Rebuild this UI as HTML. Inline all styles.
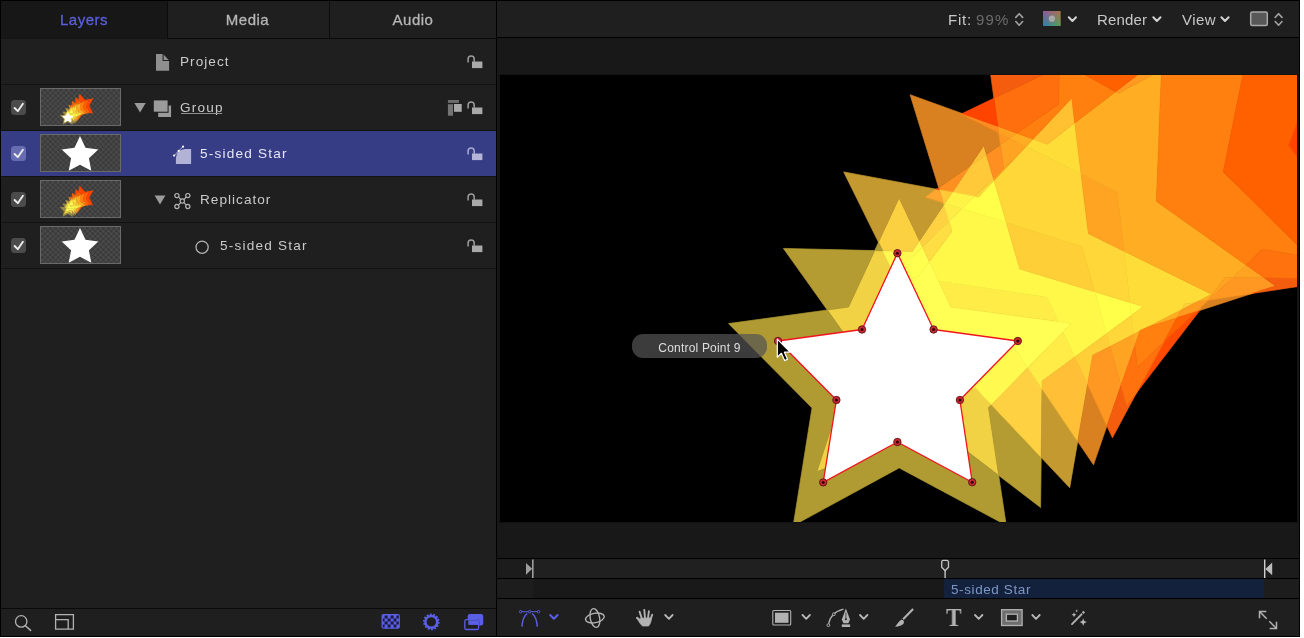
<!DOCTYPE html>
<html lang="en">
<head>
<meta charset="utf-8">
<title>Motion – Layers</title>
<style>
html,body{margin:0;padding:0;background:#fff;}
body{width:1304px;height:638px;overflow:hidden;position:relative;font-family:"Liberation Sans",sans-serif;}
#app{position:absolute;left:0;top:0;width:1300px;height:637px;background:#000;overflow:hidden;}
.abs{position:absolute;}
.tab,.lbl,.tb,.tx{will-change:transform;}
.tab{position:absolute;top:1px;height:37px;line-height:37px;text-align:center;font-size:15px;color:#b6b6b6;background:#1f1f1f;letter-spacing:.5px;-webkit-text-stroke:.3px;}
.tab.on{background:#171717;color:#5b5fe0;height:38px;}
.row{position:absolute;left:1px;width:495px;height:45px;background:#1f1f1f;}
.row.sel{background:#373d85;}
.lbl{position:absolute;font-size:13.6px;line-height:16px;color:#c9c9c9;letter-spacing:1.2px;white-space:nowrap;}
.cb{position:absolute;left:10px;width:15px;height:15px;border-radius:3.5px;background:#4b4b4b;}
.row.sel .cb{background:#686cb0;}
.th{position:absolute;left:39px;top:3px;width:79px;height:36px;border:1px solid #6a6a6a;background-color:#424242;overflow:hidden;}
.tb{position:absolute;font-size:15px;line-height:18px;color:#c8c8c8;letter-spacing:.45px;white-space:nowrap;}
svg{position:absolute;left:0;top:0;overflow:visible;}
</style>
</head>
<body>
<div id="app">

<!-- ============ LEFT PANEL ============ -->
<div class="abs" style="left:1px;top:1px;width:495px;height:635px;background:#1f1f1f"></div>
<div class="abs" style="left:1px;top:38px;width:495px;height:1px;background:#0a0a0a"></div>
<div class="tab on" style="left:1px;width:166px">Layers</div>
<div class="tab" style="left:168px;width:159px">Media</div>
<div class="tab" style="left:330px;width:166px">Audio</div>
<div class="abs" style="left:1px;top:38px;width:166px;height:1px;background:#141414"></div>
<div class="abs" style="left:167px;top:1px;width:1px;height:38px;background:#0c0c0c"></div>
<div class="abs" style="left:329px;top:1px;width:1px;height:38px;background:#0c0c0c"></div>

<div class="row" style="top:39px"><span class="lbl" style="left:178.5px;top:14.5px;letter-spacing:1.05px">Project</span></div>
<div class="abs" style="left:1px;top:84px;width:495px;height:1px;background:#121212"></div>
<div class="row" style="top:85px"><div class="cb" style="top:15px"></div><div class="th"><svg width="79" height="36" viewBox="0 0 79 36"><defs><pattern id="chk2" width="5.3" height="5.3" patternUnits="userSpaceOnUse"><rect width="5.3" height="5.3" fill="#3b3b3b"/><rect width="2.65" height="2.65" fill="#494949"/><rect x="2.65" y="2.65" width="2.65" height="2.65" fill="#494949"/></pattern></defs><rect width="79" height="36" fill="url(#chk2)"/><g transform="translate(-15.66 11.00) scale(0.0472)"><path fill="#ffc83e" fill-opacity="0.56" d="M899,198 919,241 944,205 943,203 925,197 937,189 844,172 879,242ZM1042,389 1041,457 1070,488 1078,441Z"/><path fill="#ffd443" fill-opacity="0.97" d="M919,241 899,198 879,242 883,251 912,252Z"/><path fill="#ffd242" stroke="#ffd242" stroke-width="5" d="M919,241 922,247 949,221 944,205ZM1028,368 991,405 1041,457 1042,389Z"/><path fill="#fff950" stroke="#fff950" stroke-width="5" d="M922,247 919,241 912,252 883,251 894,274ZM991,405 1028,368 1012,344 875,346 841,412 975,388ZM895,275 903,292 896,307 917,278Z"/><path fill="#ffde43" stroke="#ffde43" stroke-width="5" d="M922,247 929,262 952,231 949,221Z"/><path fill="#ffff50" stroke="#ffff50" stroke-width="5" d="M929,262 922,247 894,274 895,275 917,278Z"/><path fill="#fff848" stroke="#fff848" stroke-width="5" d="M929,262 939,281 1047,297 1058,322 1071,323 1063,332 1075,357 1107,334 1095,292 1020,269 1006,223 962,209 949,221 952,231Z"/><path fill="#ffff54" stroke="#ffff54" stroke-width="5" d="M939,281 929,262 917,278ZM1058,322 951,307 939,281 917,278 896,307 875,346 1012,344 1028,368 1063,332ZM1063,332 1071,323 1058,322Z"/><path fill="#ffec47" stroke="#ffec47" stroke-width="5" d="M939,281 951,307 1058,322 1047,297ZM1063,332 1028,368 1042,389 1042,381 1075,357ZM945,203 944,205 949,221 962,209Z"/><path fill="#ffdc47" fill-opacity="0.46" d="M991,405 989,408 999,475 1041,508 1041,457ZM827,310 849,307 875,251 783,248Z"/><path fill="#ffdf48" fill-opacity="0.88" d="M999,475 989,408 991,405 975,388 841,412 875,346 866,346 896,307 903,292 895,275 894,275 894,274 883,251 875,251 849,307 827,310 857,351 817,472 938,429Z"/><path fill="#ffe249" fill-opacity="0.44" d="M827,310 728,324 812,408 793,526 899,468 1006,525 999,475 938,429 817,472 857,351ZM879,242 875,251 883,251Z"/><path fill="#ff9626" fill-opacity="0.70" d="M984,146 986,154 1000,145 999,133 961,114 962,114 910,95 939,188 970,166ZM1088,385 1078,441 1094,465 1107,426ZM1200,310 1252,294 1208,300 1206,303Z"/><path fill="#ffc039" stroke="#ffc039" stroke-width="5" d="M986,154 984,146 970,166Z"/><path fill="#ff8f20" stroke="#ff8f20" stroke-width="5" d="M986,154 993,178 1004,168 1000,145ZM952,192 970,166 939,188 939,190ZM1196,312 1200,310 1206,303Z"/><path fill="#ffc939" stroke="#ffc939" stroke-width="5" d="M993,178 986,154 970,166 952,192 975,196Z"/><path fill="#ffa422" stroke="#ffa422" stroke-width="5" d="M993,178 994,181 1026,147 1010,138 1000,145 1004,168ZM1081,174 1088,234 1124,251 1117,193ZM1134,334 1110,346 1121,385 1135,346ZM1264,278 1246,265 1233,277Z"/><path fill="#ffd83a" stroke="#ffd83a" stroke-width="5" d="M994,181 993,178 975,196 978,197Z"/><path fill="#ffd738" stroke="#ffd738" stroke-width="5" d="M994,181 1006,223 1082,246 1095,292 1130,303 1124,251 1088,234 1081,174 1026,147ZM1131,315 1107,334 1110,346 1134,334Z"/><path fill="#fffe48" stroke="#fffe48" stroke-width="5" d="M1006,223 994,181 978,197 975,196 962,209ZM1130,303 1095,292 1107,334 1131,315Z"/><path fill="#ffcf38" stroke="#ffcf38" stroke-width="5" d="M1006,223 1020,269 1095,292 1082,246ZM1107,334 1075,357 1088,385 1093,355 1110,346Z"/><path fill="#ffdd38" stroke="#ffdd38" stroke-width="5" d="M1130,303 1143,307 1131,315 1134,334 1140,331 1140,330 1147,328 1181,310 1185,304 1197,302 1212,294 1124,251ZM1081,174 1075,123 1047,144 1033,139 1026,147Z"/><path fill="#ffff48" stroke="#ffff48" stroke-width="5" d="M1131,315 1143,307 1130,303Z"/><path fill="#ffc037" stroke="#ffc037" stroke-width="5" d="M1075,357 1042,381 1042,389 1078,441 1088,385ZM944,205 945,203 943,203Z"/><path fill="#ffc937" stroke="#ffc937" stroke-width="5" d="M945,203 952,192 939,190 943,203Z"/><path fill="#fff347" stroke="#fff347" stroke-width="5" d="M952,192 945,203 962,209 975,196Z"/><path fill="#ff800e" stroke="#ff800e" stroke-width="5" d="M1072,98 1075,123 1116,92 1066,64 1059,67 1058,104 1017,133 1033,139ZM1147,328 1140,331 1135,346 1137,367 1164,342 1177,318ZM1162,70 1156,201 1246,265 1263,249 1310,257 1223,172 1253,24 1238,29Z"/><path fill="#ffc031" stroke="#ffc031" stroke-width="5" d="M1075,123 1072,98 1033,139 1047,144ZM1140,331 1147,328 1140,330Z"/><path fill="#ffad22" stroke="#ffad22" stroke-width="5" d="M1075,123 1081,174 1117,193 1124,251 1212,294 1197,302 1208,300 1225,277 1233,277 1246,265 1156,201 1162,70 1118,93 1116,92ZM1181,310 1147,328 1177,318ZM1140,331 1134,334 1135,346ZM1026,147 1033,139 1017,133 1010,138Z"/><path fill="#ff9920" stroke="#ff9920" stroke-width="5" d="M1197,302 1181,310 1177,318 1196,312 1206,303 1208,300ZM1162,70 1162,56 1116,92 1118,93Z"/><path fill="#ffd037" stroke="#ffd037" stroke-width="5" d="M1181,310 1197,302 1185,304Z"/><path fill="#ff9822" stroke="#ff9822" stroke-width="5" d="M1110,346 1093,355 1088,385 1107,426 1121,385ZM1252,294 1276,286 1264,278 1233,277 1208,300ZM999,133 1000,145 1010,138Z"/><path fill="#ffed49" stroke="#ffed49" stroke-width="5" d="M875,346 896,307 866,346Z"/><path fill="#ffdf44" stroke="#ffdf44" stroke-width="5" d="M895,275 894,274 894,275Z"/><path fill="#ff4a00" stroke="#ff4a00" stroke-width="5" d="M937,189 939,190 939,188ZM1200,310 1196,312 1164,342 1137,393ZM1310,257 1331,278 1386,279 1379,269ZM1059,61 1066,64 1117,39 1126,-7 1062,-57Z"/><path fill="#ffa630" stroke="#ffa630" stroke-width="5" d="M939,190 937,189 925,197 943,203Z"/><path fill="#ff6000" stroke="#ff6000" stroke-width="5" d="M1162,56 1162,70 1238,29 1192,45 1126,-7 1117,39 1066,64 1116,92ZM1196,312 1177,318 1164,342ZM1253,24 1223,172 1310,257 1379,269 1289,145 1346,-9Z"/><path fill="#ff720e" stroke="#ff720e" stroke-width="5" d="M1246,265 1264,278 1331,278 1310,257 1263,249ZM1135,346 1121,385 1127,406 1137,393 1164,342 1137,367ZM1066,64 1059,61 1059,67Z"/><path fill="#ff610f" fill-opacity="0.92" d="M1264,278 1276,286 1252,294 1334,281 1331,278ZM1121,385 1107,426 1112,438 1137,393 1127,406ZM1059,61 983,18 994,98 1059,67Z"/><path fill="#ff4400" stroke="#ff4400" stroke-width="5" d="M962,114 998,126 994,98ZM1254,20 1253,24 1346,-9 1289,145 1379,269 1431,278 1351,121 1438,-30 1267,-0 1148,-130 1126,-7 1192,45 1238,29Z"/><path fill="#ff8c20" stroke="#ff8c20" stroke-width="5" d="M998,126 962,114 961,114 999,133ZM1208,300 1208,300 1206,303Z"/><path fill="#ff6f0e" stroke="#ff6f0e" stroke-width="5" d="M998,126 1017,133 1058,104 1059,67 994,98ZM1253,24 1254,20 1238,29Z"/><path fill="#ffa222" stroke="#ffa222" stroke-width="5" d="M1017,133 998,126 999,133 1010,138ZM1208,300 1208,300 1233,277 1225,277Z"/><polygon points="897.4,253.2 933.6,329.5 1017.8,341.0 959.9,400.0 972.2,482.2 897.4,442.0 823.2,482.4 836.4,400.0 778.0,341.0 862.0,329.5" fill="#fff"/></g></svg></div>
 <span class="lbl" style="left:179px;top:14.5px">Group</span><div class="abs" style="left:179.5px;top:28px;width:41.5px;height:1px;background:#909090"></div></div>
<div class="abs" style="left:1px;top:130px;width:495px;height:1px;background:#121212"></div>
<div class="row sel" style="top:131px"><div class="cb" style="top:15px"></div><div class="th"><svg width="79" height="36" viewBox="0 0 79 36"><defs><pattern id="chk1" width="5.3" height="5.3" patternUnits="userSpaceOnUse"><rect width="5.3" height="5.3" fill="#3b3b3b"/><rect width="2.65" height="2.65" fill="#494949"/><rect x="2.65" y="2.65" width="2.65" height="2.65" fill="#494949"/></pattern></defs><rect width="79" height="36" fill="url(#chk1)"/><polygon points="39.0,1.1 44.5,12.7 57.3,14.4 47.9,23.2 50.3,35.8 39.0,29.7 27.7,35.8 30.1,23.2 20.7,14.4 33.5,12.7" fill="#fff"/></svg></div>
 <span class="lbl" style="left:199px;top:14.5px;color:#e6e6f4">5-sided Star</span></div>
<div class="abs" style="left:1px;top:176px;width:495px;height:1px;background:#121212"></div>
<div class="row" style="top:177px"><div class="cb" style="top:15px"></div><div class="th"><svg width="79" height="36" viewBox="0 0 79 36"><defs><pattern id="chk3" width="5.3" height="5.3" patternUnits="userSpaceOnUse"><rect width="5.3" height="5.3" fill="#3b3b3b"/><rect width="2.65" height="2.65" fill="#494949"/><rect x="2.65" y="2.65" width="2.65" height="2.65" fill="#494949"/></pattern></defs><rect width="79" height="36" fill="url(#chk3)"/><g transform="translate(-15.66 11.00) scale(0.0472)"><path fill="#ffc83e" fill-opacity="0.56" d="M899,198 919,241 944,205 943,203 925,197 937,189 844,172 879,242ZM1042,389 1041,457 1070,488 1078,441Z"/><path fill="#ffd443" fill-opacity="0.97" d="M919,241 899,198 879,242 883,251 912,252Z"/><path fill="#ffd242" stroke="#ffd242" stroke-width="5" d="M919,241 922,247 949,221 944,205ZM1028,368 991,405 1041,457 1042,389Z"/><path fill="#fff950" stroke="#fff950" stroke-width="5" d="M922,247 919,241 912,252 883,251 894,274ZM991,405 1028,368 1012,344 875,346 841,412 975,388ZM895,275 903,292 896,307 917,278Z"/><path fill="#ffde43" stroke="#ffde43" stroke-width="5" d="M922,247 929,262 952,231 949,221Z"/><path fill="#ffff50" stroke="#ffff50" stroke-width="5" d="M929,262 922,247 894,274 895,275 917,278Z"/><path fill="#fff848" stroke="#fff848" stroke-width="5" d="M929,262 939,281 1047,297 1058,322 1071,323 1063,332 1075,357 1107,334 1095,292 1020,269 1006,223 962,209 949,221 952,231Z"/><path fill="#ffff54" stroke="#ffff54" stroke-width="5" d="M939,281 929,262 917,278ZM1058,322 951,307 939,281 917,278 896,307 875,346 1012,344 1028,368 1063,332ZM1063,332 1071,323 1058,322Z"/><path fill="#ffec47" stroke="#ffec47" stroke-width="5" d="M939,281 951,307 1058,322 1047,297ZM1063,332 1028,368 1042,389 1042,381 1075,357ZM945,203 944,205 949,221 962,209Z"/><path fill="#ffdc47" fill-opacity="0.46" d="M991,405 989,408 999,475 1041,508 1041,457ZM827,310 849,307 875,251 783,248Z"/><path fill="#ffdf48" fill-opacity="0.88" d="M999,475 989,408 991,405 975,388 841,412 875,346 866,346 896,307 903,292 895,275 894,275 894,274 883,251 875,251 849,307 827,310 857,351 817,472 938,429Z"/><path fill="#ffe249" fill-opacity="0.44" d="M827,310 728,324 812,408 793,526 899,468 1006,525 999,475 938,429 817,472 857,351ZM879,242 875,251 883,251Z"/><path fill="#ff9626" fill-opacity="0.70" d="M984,146 986,154 1000,145 999,133 961,114 962,114 910,95 939,188 970,166ZM1088,385 1078,441 1094,465 1107,426ZM1200,310 1252,294 1208,300 1206,303Z"/><path fill="#ffc039" stroke="#ffc039" stroke-width="5" d="M986,154 984,146 970,166Z"/><path fill="#ff8f20" stroke="#ff8f20" stroke-width="5" d="M986,154 993,178 1004,168 1000,145ZM952,192 970,166 939,188 939,190ZM1196,312 1200,310 1206,303Z"/><path fill="#ffc939" stroke="#ffc939" stroke-width="5" d="M993,178 986,154 970,166 952,192 975,196Z"/><path fill="#ffa422" stroke="#ffa422" stroke-width="5" d="M993,178 994,181 1026,147 1010,138 1000,145 1004,168ZM1081,174 1088,234 1124,251 1117,193ZM1134,334 1110,346 1121,385 1135,346ZM1264,278 1246,265 1233,277Z"/><path fill="#ffd83a" stroke="#ffd83a" stroke-width="5" d="M994,181 993,178 975,196 978,197Z"/><path fill="#ffd738" stroke="#ffd738" stroke-width="5" d="M994,181 1006,223 1082,246 1095,292 1130,303 1124,251 1088,234 1081,174 1026,147ZM1131,315 1107,334 1110,346 1134,334Z"/><path fill="#fffe48" stroke="#fffe48" stroke-width="5" d="M1006,223 994,181 978,197 975,196 962,209ZM1130,303 1095,292 1107,334 1131,315Z"/><path fill="#ffcf38" stroke="#ffcf38" stroke-width="5" d="M1006,223 1020,269 1095,292 1082,246ZM1107,334 1075,357 1088,385 1093,355 1110,346Z"/><path fill="#ffdd38" stroke="#ffdd38" stroke-width="5" d="M1130,303 1143,307 1131,315 1134,334 1140,331 1140,330 1147,328 1181,310 1185,304 1197,302 1212,294 1124,251ZM1081,174 1075,123 1047,144 1033,139 1026,147Z"/><path fill="#ffff48" stroke="#ffff48" stroke-width="5" d="M1131,315 1143,307 1130,303Z"/><path fill="#ffc037" stroke="#ffc037" stroke-width="5" d="M1075,357 1042,381 1042,389 1078,441 1088,385ZM944,205 945,203 943,203Z"/><path fill="#ffc937" stroke="#ffc937" stroke-width="5" d="M945,203 952,192 939,190 943,203Z"/><path fill="#fff347" stroke="#fff347" stroke-width="5" d="M952,192 945,203 962,209 975,196Z"/><path fill="#ff800e" stroke="#ff800e" stroke-width="5" d="M1072,98 1075,123 1116,92 1066,64 1059,67 1058,104 1017,133 1033,139ZM1147,328 1140,331 1135,346 1137,367 1164,342 1177,318ZM1162,70 1156,201 1246,265 1263,249 1310,257 1223,172 1253,24 1238,29Z"/><path fill="#ffc031" stroke="#ffc031" stroke-width="5" d="M1075,123 1072,98 1033,139 1047,144ZM1140,331 1147,328 1140,330Z"/><path fill="#ffad22" stroke="#ffad22" stroke-width="5" d="M1075,123 1081,174 1117,193 1124,251 1212,294 1197,302 1208,300 1225,277 1233,277 1246,265 1156,201 1162,70 1118,93 1116,92ZM1181,310 1147,328 1177,318ZM1140,331 1134,334 1135,346ZM1026,147 1033,139 1017,133 1010,138Z"/><path fill="#ff9920" stroke="#ff9920" stroke-width="5" d="M1197,302 1181,310 1177,318 1196,312 1206,303 1208,300ZM1162,70 1162,56 1116,92 1118,93Z"/><path fill="#ffd037" stroke="#ffd037" stroke-width="5" d="M1181,310 1197,302 1185,304Z"/><path fill="#ff9822" stroke="#ff9822" stroke-width="5" d="M1110,346 1093,355 1088,385 1107,426 1121,385ZM1252,294 1276,286 1264,278 1233,277 1208,300ZM999,133 1000,145 1010,138Z"/><path fill="#ffed49" stroke="#ffed49" stroke-width="5" d="M875,346 896,307 866,346Z"/><path fill="#ffdf44" stroke="#ffdf44" stroke-width="5" d="M895,275 894,274 894,275Z"/><path fill="#ff4a00" stroke="#ff4a00" stroke-width="5" d="M937,189 939,190 939,188ZM1200,310 1196,312 1164,342 1137,393ZM1310,257 1331,278 1386,279 1379,269ZM1059,61 1066,64 1117,39 1126,-7 1062,-57Z"/><path fill="#ffa630" stroke="#ffa630" stroke-width="5" d="M939,190 937,189 925,197 943,203Z"/><path fill="#ff6000" stroke="#ff6000" stroke-width="5" d="M1162,56 1162,70 1238,29 1192,45 1126,-7 1117,39 1066,64 1116,92ZM1196,312 1177,318 1164,342ZM1253,24 1223,172 1310,257 1379,269 1289,145 1346,-9Z"/><path fill="#ff720e" stroke="#ff720e" stroke-width="5" d="M1246,265 1264,278 1331,278 1310,257 1263,249ZM1135,346 1121,385 1127,406 1137,393 1164,342 1137,367ZM1066,64 1059,61 1059,67Z"/><path fill="#ff610f" fill-opacity="0.92" d="M1264,278 1276,286 1252,294 1334,281 1331,278ZM1121,385 1107,426 1112,438 1137,393 1127,406ZM1059,61 983,18 994,98 1059,67Z"/><path fill="#ff4400" stroke="#ff4400" stroke-width="5" d="M962,114 998,126 994,98ZM1254,20 1253,24 1346,-9 1289,145 1379,269 1431,278 1351,121 1438,-30 1267,-0 1148,-130 1126,-7 1192,45 1238,29Z"/><path fill="#ff8c20" stroke="#ff8c20" stroke-width="5" d="M998,126 962,114 961,114 999,133ZM1208,300 1208,300 1206,303Z"/><path fill="#ff6f0e" stroke="#ff6f0e" stroke-width="5" d="M998,126 1017,133 1058,104 1059,67 994,98ZM1253,24 1254,20 1238,29Z"/><path fill="#ffa222" stroke="#ffa222" stroke-width="5" d="M1017,133 998,126 999,133 1010,138ZM1208,300 1208,300 1233,277 1225,277Z"/></g></svg></div>
 <span class="lbl" style="left:198.5px;top:14.5px;letter-spacing:1.02px">Replicator</span></div>
<div class="abs" style="left:1px;top:222px;width:495px;height:1px;background:#121212"></div>
<div class="row" style="top:223px"><div class="cb" style="top:15px"></div><div class="th"><svg width="79" height="36" viewBox="0 0 79 36"><defs><pattern id="chk1" width="5.3" height="5.3" patternUnits="userSpaceOnUse"><rect width="5.3" height="5.3" fill="#3b3b3b"/><rect width="2.65" height="2.65" fill="#494949"/><rect x="2.65" y="2.65" width="2.65" height="2.65" fill="#494949"/></pattern></defs><rect width="79" height="36" fill="url(#chk1)"/><polygon points="39.0,1.1 44.5,12.7 57.3,14.4 47.9,23.2 50.3,35.8 39.0,29.7 27.7,35.8 30.1,23.2 20.7,14.4 33.5,12.7" fill="#fff"/></svg></div>
 <span class="lbl" style="left:219px;top:14.5px">5-sided Star</span></div>
<div class="abs" style="left:1px;top:268px;width:495px;height:1px;background:#121212"></div>
<!-- bottom bar of layers list -->
<div class="abs" style="left:1px;top:608px;width:495px;height:1px;background:#0a0a0a"></div>

<!-- ============ RIGHT PANEL ============ -->
<div class="abs" style="left:497px;top:1px;width:802px;height:36px;background:#1f1f1f"></div>
<div class="abs" style="left:497px;top:38px;width:802px;height:520px;background:#181818"></div>
<span class="tb" style="left:947.5px;top:11px;letter-spacing:.75px">Fit:</span>
<span class="tb" style="left:976px;top:11px;color:#6c6c6c;letter-spacing:1.1px">99%</span>
<span class="tb" style="left:1097px;top:11px;letter-spacing:.15px">Render</span>
<span class="tb" style="left:1182px;top:11px">View</span>

<!-- canvas -->
<div class="abs" style="left:500px;top:75px;width:797px;height:447px;background:#000;overflow:hidden;box-shadow:0 0 0 1px #101214">
<svg width="797" height="447" viewBox="500 75 797 447">
<g id="fx" stroke-width="0.7" stroke-linejoin="round">
<path fill="#f0d244" stroke="#f0d244" d="M988.5,407.8 991.4,404.8 975.4,387.8 840.9,411.9 875.2,346.1 866.2,346.3 895.5,307.0 903.2,292.2 894.6,274.7 894.0,274.7 894.3,274.3 882.8,250.8 874.7,250.6 848.5,307.1 827.3,310.0 856.7,351.2 816.9,471.6 938.1,429.0 998.7,475.4Z"/>
<path fill="#b49b32" stroke="#b49b32" d="M991.4,404.8 988.5,407.8 998.7,475.4 1040.6,507.5 1041.2,457.5ZM827.3,310.0 848.5,307.1 874.7,250.6 783.4,248.4Z"/>
<path fill="#fff950" stroke="#fff950" d="M991.4,404.8 1027.8,367.8 1011.5,343.9 875.2,346.1 840.9,411.9 975.4,387.8ZM922.4,247.1 919.5,240.9 912.2,251.6 882.8,250.8 894.3,274.3ZM894.6,274.7 903.2,292.2 895.5,307.0 917.1,278.0Z"/>
<path fill="#fed142" stroke="#fed142" d="M1027.8,367.8 991.4,404.8 1041.2,457.5 1042.0,388.8ZM919.5,240.9 922.4,247.1 949.0,221.3 943.9,204.7Z"/>
<path fill="#ffff54" stroke="#ffff54" d="M1027.8,367.8 1063.1,331.7 1058.4,321.6 950.9,307.0 938.6,281.1 917.1,278.0 895.5,307.0 875.2,346.1 1011.5,343.9ZM1063.1,331.7 1071.3,323.4 1058.4,321.6ZM938.6,281.1 929.4,261.7 917.1,278.0Z"/>
<path fill="#ffec47" stroke="#ffec47" d="M1063.1,331.7 1027.8,367.8 1042.0,388.8 1042.1,381.1 1074.9,357.0ZM938.6,281.1 950.9,307.0 1058.4,321.6 1046.9,296.9ZM944.9,203.3 943.9,204.7 949.0,221.3 962.1,208.7Z"/>
<path fill="#fff848" stroke="#fff848" d="M1058.4,321.6 1071.3,323.4 1063.1,331.7 1074.9,357.0 1106.5,333.7 1094.8,291.8 1019.7,268.9 1006.3,222.6 962.1,208.7 949.0,221.3 952.1,231.2 929.4,261.7 938.6,281.1 1046.9,296.9Z"/>
<path fill="#ffff50" stroke="#ffff50" d="M929.4,261.7 922.4,247.1 894.3,274.3 894.6,274.7 917.1,278.0Z"/>
<path fill="#ffde43" stroke="#ffde43" d="M922.4,247.1 929.4,261.7 952.1,231.2 949.0,221.3Z"/>
<path fill="#fbd142" stroke="#fbd142" d="M919.5,240.9 899.1,198.0 878.5,242.3 882.8,250.8 912.2,251.6Z"/>
<path fill="#c49a30" stroke="#c49a30" d="M878.5,242.3 899.1,198.0 919.5,240.9 943.9,204.7 943.3,202.8 925.2,197.1 936.5,189.2 843.7,171.9ZM1042.0,388.8 1041.2,457.5 1069.7,487.7 1077.7,441.5Z"/>
<path fill="#af9b32" stroke="#af9b32" d="M878.5,242.3 874.7,250.6 882.8,250.8ZM827.3,310.0 728.5,323.6 812.0,407.9 793.6,523.0 798.1,523.0 899.2,467.9 1002.0,523.0 1005.9,523.0 998.7,475.4 938.1,429.0 816.9,471.6 856.7,351.2Z"/>
<path fill="#ffc037" stroke="#ffc037" d="M1074.9,357.0 1042.1,381.1 1042.0,388.8 1077.7,441.5 1087.6,384.5ZM943.9,204.7 944.9,203.3 943.3,202.8Z"/>
<path fill="#ffcf38" stroke="#ffcf38" d="M1106.5,333.7 1074.9,357.0 1087.6,384.5 1092.7,355.3 1110.1,346.4ZM1006.3,222.6 1019.7,268.9 1094.8,291.8 1082.0,246.5Z"/>
<path fill="#fffe48" stroke="#fffe48" d="M1106.5,333.7 1131.4,315.4 1129.9,302.5 1094.8,291.8ZM1006.3,222.6 994.0,180.6 978.5,197.1 974.8,196.4 962.1,208.7Z"/>
<path fill="#ffd738" stroke="#ffd738" d="M1131.4,315.4 1106.5,333.7 1110.1,346.4 1133.5,334.4ZM1094.8,291.8 1129.9,302.5 1124.1,251.2 1088.4,233.6 1081.1,174.3 1026.0,146.6 994.0,180.6 1006.3,222.6 1082.0,246.5Z"/>
<path fill="#ffff48" stroke="#ffff48" d="M1131.4,315.4 1143.3,306.6 1129.9,302.5Z"/>
<path fill="#ffdd38" stroke="#ffdd38" d="M1129.9,302.5 1143.3,306.6 1131.4,315.4 1133.5,334.4 1139.8,331.1 1140.3,329.7 1146.7,327.6 1181.3,309.9 1184.5,303.9 1196.6,302.0 1211.7,294.3 1124.1,251.2ZM1081.1,174.3 1074.8,123.0 1047.3,144.2 1033.1,139.1 1026.0,146.6Z"/>
<path fill="#ffd83a" stroke="#ffd83a" d="M994.0,180.6 993.4,178.4 974.8,196.4 978.5,197.1Z"/>
<path fill="#ffa422" stroke="#ffa422" d="M993.4,178.4 994.0,180.6 1026.0,146.6 1009.6,138.3 1000.4,144.8 1003.6,168.4ZM1133.5,334.4 1110.1,346.4 1121.0,385.3 1134.8,345.6ZM1081.1,174.3 1088.4,233.6 1124.1,251.2 1117.4,192.5ZM1263.9,277.6 1246.0,264.9 1232.7,277.4Z"/>
<path fill="#ffc939" stroke="#ffc939" d="M993.4,178.4 986.4,154.5 970.3,165.7 952.4,192.2 974.8,196.4Z"/>
<path fill="#ff8f20" stroke="#ff8f20" d="M986.4,154.5 993.4,178.4 1003.6,168.4 1000.4,144.8ZM952.4,192.2 970.3,165.7 938.7,187.7 939.3,189.8ZM1196.4,311.5 1199.8,310.4 1205.7,302.8Z"/>
<path fill="#ffc039" stroke="#ffc039" d="M986.4,154.5 983.9,145.6 970.3,165.7Z"/>
<path fill="#d98020" stroke="#d98020" d="M970.3,165.7 983.9,145.6 986.4,154.5 1000.4,144.8 998.7,132.9 961.1,114.0 962.2,113.5 910.1,94.7 938.7,187.7ZM1087.6,384.5 1077.7,441.5 1093.5,464.8 1106.9,426.0ZM1199.8,310.4 1252.0,293.5 1208.4,300.2 1205.7,302.8Z"/>
<path fill="#fff347" stroke="#fff347" d="M952.4,192.2 944.9,203.3 962.1,208.7 974.8,196.4Z"/>
<path fill="#ffc937" stroke="#ffc937" d="M944.9,203.3 952.4,192.2 939.3,189.8 943.3,202.8Z"/>
<path fill="#ffa630" stroke="#ffa630" d="M939.3,189.8 936.5,189.2 925.2,197.1 943.3,202.8Z"/>
<path fill="#ff4a00" stroke="#ff4a00" d="M936.5,189.2 939.3,189.8 938.7,187.7ZM1199.8,310.4 1196.4,311.5 1163.9,342.1 1136.7,392.6Z"/>
<path fill="#ffdf44" stroke="#ffdf44" d="M894.6,274.7 894.3,274.3 894.0,274.7Z"/>
<path fill="#ffed49" stroke="#ffed49" d="M875.2,346.1 895.5,307.0 866.2,346.3Z"/>
<path fill="#ff9822" stroke="#ff9822" d="M1110.1,346.4 1092.7,355.3 1087.6,384.5 1106.9,426.0 1121.0,385.3ZM1252.0,293.5 1275.6,285.9 1263.9,277.6 1232.7,277.4 1208.4,300.2ZM998.7,132.9 1000.4,144.8 1009.6,138.3Z"/>
<path fill="#ffad22" stroke="#ffad22" d="M1139.8,331.1 1133.5,334.4 1134.8,345.6ZM1181.3,309.9 1146.7,327.6 1177.0,317.8ZM1124.1,251.2 1211.7,294.3 1196.6,302.0 1207.6,300.4 1225.3,277.3 1232.7,277.4 1246.0,264.9 1156.4,201.3 1161.4,74.0 1154.3,74.0 1118.5,93.3 1115.6,91.7 1074.8,123.0 1081.1,174.3 1117.4,192.5ZM1026.0,146.6 1033.1,139.1 1016.9,133.2 1009.6,138.3Z"/>
<path fill="#ffc031" stroke="#ffc031" d="M1139.8,331.1 1146.7,327.6 1140.3,329.7ZM1074.8,123.0 1071.8,98.1 1033.1,139.1 1047.3,144.2Z"/>
<path fill="#ff800e" stroke="#ff800e" d="M1146.7,327.6 1139.8,331.1 1134.8,345.6 1137.3,367.2 1163.9,342.1 1177.0,317.8ZM1033.1,139.1 1071.8,98.1 1074.8,123.0 1115.6,91.7 1083.7,74.0 1059.2,74.0 1058.5,104.3 1016.9,133.2ZM1161.4,74.0 1156.4,201.3 1246.0,264.9 1262.5,249.3 1298.0,255.4 1298.0,245.5 1223.3,171.8 1243.1,74.0Z"/>
<path fill="#ffd037" stroke="#ffd037" d="M1181.3,309.9 1196.6,302.0 1184.5,303.9Z"/>
<path fill="#ff9920" stroke="#ff9920" d="M1196.6,302.0 1181.3,309.9 1177.0,317.8 1196.4,311.5 1205.7,302.8 1207.6,300.4ZM1154.3,74.0 1138.7,74.0 1115.6,91.7 1118.5,93.3Z"/>
<path fill="#ffa222" stroke="#ffa222" d="M1016.9,133.2 997.8,126.3 998.7,132.9 1009.6,138.3ZM1207.6,300.4 1208.4,300.2 1232.7,277.4 1225.3,277.3Z"/>
<path fill="#ff6f0e" stroke="#ff6f0e" d="M997.8,126.3 1016.9,133.2 1058.5,104.3 1059.2,74.0 1044.5,74.0 993.9,98.3Z"/>
<path fill="#ff8c20" stroke="#ff8c20" d="M997.8,126.3 962.2,113.5 961.1,114.0 998.7,132.9ZM1208.4,300.2 1207.6,300.4 1205.7,302.8Z"/>
<path fill="#ff4400" stroke="#ff4400" d="M962.2,113.5 997.8,126.3 993.9,98.3ZM1298.0,120.1 1288.5,145.2 1298.0,158.2Z"/>
<path fill="#f55d0e" stroke="#f55d0e" d="M1121.0,385.3 1106.9,426.0 1112.4,437.8 1136.7,392.6 1126.8,405.6ZM1263.9,277.6 1275.6,285.9 1252.0,293.5 1298.0,286.5 1298.0,277.9ZM1044.5,74.0 990.6,74.0 993.9,98.3Z"/>
<path fill="#ff720e" stroke="#ff720e" d="M1134.8,345.6 1121.0,385.3 1126.8,405.6 1136.7,392.6 1163.9,342.1 1137.3,367.2ZM1246.0,264.9 1263.9,277.6 1298.0,277.9 1298.0,255.4 1262.5,249.3Z"/>
<path fill="#ff6000" stroke="#ff6000" d="M1196.4,311.5 1177.0,317.8 1163.9,342.1ZM1115.6,91.7 1138.7,74.0 1083.7,74.0ZM1243.1,74.0 1223.3,171.8 1298.0,245.5 1298.0,158.2 1288.5,145.2 1298.0,120.1 1298.0,74.0Z"/>
</g>
<polygon points="897.4,253.2 933.6,329.5 1017.8,341.0 959.9,400.0 972.2,482.2 897.4,442.0 823.2,482.4 836.4,400.0 778.0,341.0 862.0,329.5" fill="#fff" stroke="#f0141e" stroke-width="1.3" stroke-linejoin="round"/>
<circle cx="897.4" cy="253.2" r="3.7" fill="#cc2730" stroke="#5e1519" stroke-width=".9"/><circle cx="897.4" cy="253.2" r="1.5" fill="#2a0507"/>
<circle cx="933.6" cy="329.5" r="3.7" fill="#cc2730" stroke="#5e1519" stroke-width=".9"/><circle cx="933.6" cy="329.5" r="1.5" fill="#2a0507"/>
<circle cx="1017.8" cy="341.0" r="3.7" fill="#cc2730" stroke="#5e1519" stroke-width=".9"/><circle cx="1017.8" cy="341.0" r="1.5" fill="#2a0507"/>
<circle cx="959.9" cy="400.0" r="3.7" fill="#cc2730" stroke="#5e1519" stroke-width=".9"/><circle cx="959.9" cy="400.0" r="1.5" fill="#2a0507"/>
<circle cx="972.2" cy="482.2" r="3.7" fill="#cc2730" stroke="#5e1519" stroke-width=".9"/><circle cx="972.2" cy="482.2" r="1.5" fill="#2a0507"/>
<circle cx="897.4" cy="442.0" r="3.7" fill="#cc2730" stroke="#5e1519" stroke-width=".9"/><circle cx="897.4" cy="442.0" r="1.5" fill="#2a0507"/>
<circle cx="823.2" cy="482.4" r="3.7" fill="#cc2730" stroke="#5e1519" stroke-width=".9"/><circle cx="823.2" cy="482.4" r="1.5" fill="#2a0507"/>
<circle cx="836.4" cy="400.0" r="3.7" fill="#cc2730" stroke="#5e1519" stroke-width=".9"/><circle cx="836.4" cy="400.0" r="1.5" fill="#2a0507"/>
<circle cx="778.0" cy="341.0" r="3.7" fill="#cc2730" stroke="#5e1519" stroke-width=".9"/><circle cx="778.0" cy="341.0" r="1.5" fill="#2a0507"/>
<circle cx="862.0" cy="329.5" r="3.7" fill="#cc2730" stroke="#5e1519" stroke-width=".9"/><circle cx="862.0" cy="329.5" r="1.5" fill="#2a0507"/>
<path d="M777.300 339.200V357.200L781.400 353.300L784.600 360.600L787.500 359.300L784.400 352.200H790.200Z" fill="#000" stroke="#fff" stroke-width="1.200" stroke-linejoin="round"/>

</svg>
</div>
<!-- tooltip -->
<div class="abs tx" style="left:632px;top:334px;width:135px;height:24px;border-radius:11px;background:rgba(84,84,84,.714);color:#dedede;font-size:12px;line-height:28.5px;text-align:center;letter-spacing:.2px">Control Point 9</div>

<!-- timeline -->
<div class="abs" style="left:497px;top:559px;width:802px;height:19px;background:#1c1c1c"></div>
<div class="abs" style="left:533px;top:559px;width:731px;height:19px;background:#202020"></div>
<div class="abs" style="left:497px;top:579px;width:802px;height:19px;background:#1d1d1d"></div>
<div class="abs" style="left:533px;top:579px;width:731px;height:19px;background:#191919"></div>
<div class="abs" style="left:944px;top:579px;width:320px;height:19px;background:#14213c"></div>
<span class="abs tx" style="left:951px;top:582px;font-size:13.5px;line-height:16px;color:#7d97c4;letter-spacing:.6px;white-space:nowrap">5-sided Star</span>
<!-- toolbar -->
<div class="abs" style="left:497px;top:599px;width:802px;height:37px;background:#1f1f1f"></div>
<span class="abs tx" style="left:946.3px;top:603px;font-family:'Liberation Serif',serif;font-weight:bold;font-size:26px;line-height:30px;color:#b0b0b0;transform:scaleX(.9);transform-origin:0 0">T</span>

<!-- ============ ICONS ============ -->
<svg width="1300" height="637" viewBox="0 0 1300 637" fill="none">
<!-- project doc icon -->
<path d="M156 54h6.6v6.9h6.5v9.8H156z" fill="#8f8f8f"/>
<path d="M163.6 54.4l5.1 5.5h-5.1z" fill="#8f8f8f"/>
<!-- disclosure triangles -->
<path d="M134.4 103h11.3l-5.65 9.4z" fill="#9b9b9b"/>
<path d="M154.6 195.5h10.8l-5.4 8.9z" fill="#9b9b9b"/>
<!-- group icon -->
<path d="M158.2 105.5h12.9V117h-12.9z" fill="#9b9b9b"/>
<path d="M152.8 99.4h15.8v13.4h-15.8z" fill="#1f1f1f"/>
<path d="M153.8 100.4h13.8v11.3h-13.8z" fill="#9b9b9b"/>
<!-- shape icon (selected row) -->
<path d="M175.9 164.1V158a9.1 9.1 0 0 1 9.1-9.1h6.1v15.2z" fill="#b1b2d6"/>
<path d="M174.1 155.6L183 146.6" stroke="#e9e9f6" stroke-width=".7"/>
<circle cx="174.1" cy="155.6" r="1.15" fill="#f4f4fb"/><circle cx="178.7" cy="151" r="1.15" fill="#f4f4fb"/><circle cx="183" cy="146.7" r="1.15" fill="#f4f4fb"/>
<!-- replicator icon -->
<g stroke="#b4b4b4" stroke-width="1.2">
<path d="M178.5 197.2l2.3 2.3M186.2 197.2l-2.3 2.3M178.5 204.9l2.3-2.3M186.2 204.9l-2.3-2.3"/>
<circle cx="182.3" cy="201.05" r="2.1"/><circle cx="176.9" cy="195.6" r="2.1"/><circle cx="187.8" cy="195.6" r="2.1"/><circle cx="176.9" cy="206.5" r="2.1"/><circle cx="187.8" cy="206.5" r="2.1"/>
</g>
<!-- circle icon -->
<circle cx="202.1" cy="247.2" r="6.1" stroke="#b4b4b4" stroke-width="1.25"/>
<!-- isolate icon -->
<path d="M447.9 100h11v2.9h-11z" fill="#6c6c6c"/><path d="M447.9 104.2h5.1v11.5h-5.1z" fill="#747474"/><path d="M454 104h7.7v7.8H454z" fill="#a9a9a9"/>
<!-- locks -->
<g><path d="M468.1 62.5v-3.4a3.05 3.05 0 0 1 6.1 0v2.6" stroke="#9d9d9d" stroke-width="1.5"/><path d="M472 61.5h10.4v6.6H472z" fill="#a9a9a9"/></g>
<g transform="translate(0 46)"><path d="M468.1 62.5v-3.4a3.05 3.05 0 0 1 6.1 0v2.6" stroke="#9d9d9d" stroke-width="1.5"/><path d="M472 61.5h10.4v6.6H472z" fill="#a9a9a9"/></g>
<g transform="translate(0 138)"><path d="M468.1 62.5v-3.4a3.05 3.05 0 0 1 6.1 0v2.6" stroke="#9d9d9d" stroke-width="1.5"/><path d="M472 61.5h10.4v6.6H472z" fill="#a9a9a9"/></g>
<g transform="translate(0 184)"><path d="M468.1 62.5v-3.4a3.05 3.05 0 0 1 6.1 0v2.6" stroke="#9d9d9d" stroke-width="1.5"/><path d="M472 61.5h10.4v6.6H472z" fill="#a9a9a9"/></g>
<g transform="translate(0 92)"><path d="M468.1 62.5v-3.4a3.05 3.05 0 0 1 6.1 0v2.6" stroke="#a9aad0" stroke-width="1.5"/><path d="M472 61.5h10.4v6.6H472z" fill="#b4b5d9"/></g>
<!-- checkmarks -->
<g stroke="#ececec" stroke-width="1.9" stroke-linecap="round" stroke-linejoin="round">
<path d="M14.6 108l3.2 3.2 5.1-7.5"/><path d="M14.6 108l3.2 3.2 5.1-7.5" transform="translate(0 46)"/><path d="M14.6 108l3.2 3.2 5.1-7.5" transform="translate(0 92)"/><path d="M14.6 108l3.2 3.2 5.1-7.5" transform="translate(0 138)"/>
</g>
<!-- bottom-left: search, panel -->
<circle cx="21.2" cy="621.4" r="5.7" stroke="#b2b2b2" stroke-width="1.3"/><path d="M25.4 625.7l5.2 4.7" stroke="#b2b2b2" stroke-width="1.5" stroke-linecap="round"/>
<path d="M55.6 614.7h17.8v14.4H55.6z" stroke="#b2b2b2" stroke-width="1.3"/><path d="M55.6 619.7h12.6v9.4" stroke="#b2b2b2" stroke-width="1.3"/>
<!-- bottom-right: checker, gear, layers -->
<rect x="381.5" y="614" width="18.4" height="14.7" rx="2" fill="#5b5fe6"/>
<g fill="#1c1c40"><path d="M384.6 615.6h3v3h-3zM390.6 615.6h3v3h-3zM396.4 615.6h2.4v3h-2.4zM387.6 618.6h3v3h-3zM393.6 618.6h2.8v3h-2.8zM384.6 621.6h3v3h-3zM390.6 621.6h3v3h-3zM396.4 621.6h2.4v3h-2.4zM387.6 624.6h3v2.8h-3zM393.6 624.6h2.8v2.8h-2.8zM382.8 618.6h1.8v3h-1.8zM382.8 624.6h1.8v2.8h-1.8z"/></g>
<circle cx="431.3" cy="621.9" r="5.9" stroke="#5b5fe6" stroke-width="2.4"/>
<circle cx="431.3" cy="621.9" r="7.4" stroke="#5b5fe6" stroke-width="1.8" stroke-dasharray="1.9 1.42"/>
<rect x="467.7" y="614" width="15.5" height="11.4" rx="2.2" fill="#5b5fe6"/>
<rect x="464.1" y="619" width="15.2" height="11.2" rx="2.2" fill="#1f1f1f"/>
<rect x="464.8" y="619.7" width="13.8" height="9.8" rx="1.6" stroke="#5b5fe6" stroke-width="1.3"/>
<path d="M468.3 620.3h10v4.6h-10z" fill="#5b5fe6"/>
<!-- top-right controls -->
<g stroke="#a2a2a2" stroke-width="1.6" stroke-linecap="round" stroke-linejoin="round">
<path d="M1015.8 17.4l3.4-3.7 3.4 3.7M1015.8 21.5l3.4 3.7 3.4-3.7"/>
<path d="M1275.2 17.4l3.4-3.7 3.4 3.7M1275.2 21.5l3.4 3.7 3.4-3.7"/>
</g>
<g stroke="#d2d2d2" stroke-width="2" stroke-linecap="round" stroke-linejoin="round">
<path d="M1068.8 17.3l3.6 3.7 3.6-3.7"/><path d="M1153.3 17.3l3.6 3.7 3.6-3.7"/><path d="M1221.4 17.3l3.6 3.7 3.6-3.7"/>
</g>
<defs>
<linearGradient id="cg1" x1="0" y1="0" x2="1" y2="0"><stop offset="0" stop-color="#8f5a9c"/><stop offset="1" stop-color="#ac7248"/></linearGradient>
<linearGradient id="cg2" x1="0" y1="0" x2="1" y2="0"><stop offset="0" stop-color="#2f7db2"/><stop offset="1" stop-color="#57a154"/></linearGradient>
<linearGradient id="cgm" x1="0" y1="0" x2="0" y2="1"><stop offset="0" stop-color="#fff" stop-opacity="0"/><stop offset="1" stop-color="#fff"/></linearGradient>
<mask id="cm"><rect x="1043" y="11" width="17.6" height="15" fill="url(#cgm)"/></mask>
</defs>
<rect x="1043" y="11" width="17.6" height="15" fill="url(#cg1)"/>
<rect x="1043" y="11" width="17.6" height="15" fill="url(#cg2)" mask="url(#cm)"/>
<circle cx="1051.9" cy="18.7" r="3.1" fill="#a9a9a9"/>
<rect x="1250.7" y="11.9" width="16.6" height="13.6" rx="1.5" fill="#585858" stroke="#a9a9a9" stroke-width="1.5"/>
<!-- timeline in/out + playhead -->
<path d="M526 563l6.2 5.8-6.2 5.9z" fill="#9e9e9e"/><path d="M532 559.5h1.6V578H532z" fill="#9e9e9e"/>
<path d="M1272.200 562.600l-6.900 6.300 6.900 6.400z" fill="#bdbdbd"/><path d="M1264 559.500h1.400V578h-1.400z" fill="#d0d0d0"/>
<path d="M941.7 562a1.6 1.6 0 0 1 1.6-1.6h3.6a1.6 1.6 0 0 1 1.6 1.6v5.2l-3.4 3.6-3.4-3.6z" fill="#2a2a2a" stroke="#c4c4c4" stroke-width="1.3"/>
<path d="M944.4 570.5h1.4V578h-1.4z" fill="#c4c4c4"/>
<!-- toolbar -->
<g stroke="#5b5fe6" fill="none">
<path d="M522 611.700h6.200M531 611.700h6.200" stroke-width="1"/>
<circle cx="520.700" cy="611.700" r="1.250" stroke-width="1"/><circle cx="529.600" cy="611.700" r="1.250" stroke-width="1"/><circle cx="538.500" cy="611.700" r="1.250" stroke-width="1"/>
<path d="M521.900 626.600C522.400 620 524.200 615.600 527.200 613.500M537.300 626.600C536.800 620 535 615.600 532 613.500" stroke-width="1.500"/>
<path d="M550.2 615l3.7 3.8 3.7-3.8" stroke-width="2" stroke-linecap="round" stroke-linejoin="round"/>
</g>
<g stroke="#b2b2b2" stroke-width="1.4" fill="none">
<ellipse cx="594.900" cy="618" rx="9.500" ry="4.700" transform="rotate(-11 594.900 618)"/>
<ellipse cx="594.900" cy="618" rx="4.700" ry="9.500" transform="rotate(-11 594.900 618)"/>
</g>
<!-- hand -->
<g fill="#b2b2b2" stroke="#b2b2b2" stroke-linecap="round" stroke-linejoin="round">
<path d="M639.600 611.700l2.400 7.300M644.300 609.900l.7 8.100M648.900 611.200l-.9 6.800M652.200 614.700l-1.900 5.300" stroke-width="1.900" fill="none"/>
<path d="M637.100 617.900c1.500 1.200 2.800 2.800 4 4.600" stroke-width="2.200" fill="none"/>
<path d="M640.600 618.200l10.600-.4c.5 3-0.700 6-2.600 8.300h-6.200c-1.600-1.600-2.900-3.400-4-5.400z" stroke-width=".6"/>
</g>
<g stroke="#b8b8b8" stroke-width="1.8" stroke-linecap="round" stroke-linejoin="round" fill="none">
<path d="M665.200 615l3.700 3.800 3.700-3.800"/><path d="M802.500 615l3.700 3.800 3.700-3.800"/><path d="M860 615l3.700 3.800 3.700-3.800"/><path d="M975 615l3.700 3.800 3.700-3.800"/><path d="M1032.300 615l3.700 3.800 3.700-3.800"/>
</g>
<!-- rectangle tool -->
<rect x="772.800" y="610.500" width="17.900" height="14.500" rx="1" stroke="#b2b2b2" stroke-width="1.1"/>
<rect x="775" y="612.700" width="13.500" height="10.100" fill="#b2b2b2"/>
<!-- pen tool -->
<g stroke="#b2b2b2" fill="none">
<path d="M828.500 624.300c1.200-7.200 5.600-12.800 15-15.200" stroke-width="1.150"/>
<circle cx="828.400" cy="625.200" r="1.400" stroke-width="1" fill="#1f1f1f"/><circle cx="833.800" cy="614.300" r="1.400" stroke-width="1" fill="#1f1f1f"/>
</g>
<path d="M845.900 608.600l4.100 10.900-1.600 3.700h-5l-1.600-3.700z" fill="#b2b2b2"/><path d="M845.900 612.500v6.500" stroke="#1f1f1f" stroke-width=".7"/><circle cx="845.900" cy="619.300" r=".95" fill="#1f1f1f"/>
<path d="M841.800 624.400h8.300v2.600h-8.300z" fill="#b2b2b2"/>
<!-- brush -->
<path d="M913.100 609l-10 10.300" stroke="#b2b2b2" stroke-width="2.100" stroke-linecap="butt"/>
<path d="M901.600 619.600c2.200 .6 3 2.300 1.900 4.100-1.700 1.700-4.600 2.700-8.400 3.100 2.200-2.700 3.600-5.700 6.500-7.200z" fill="#b2b2b2"/>
<!-- mask tool -->
<rect x="1001.600" y="609.700" width="20.500" height="15.800" fill="#6e6e6e" stroke="#b2b2b2" stroke-width="1.300"/>
<rect x="1006.400" y="614.200" width="11" height="6.800" fill="#1f1f1f" stroke="#b2b2b2" stroke-width="1.300"/>
<!-- wand -->
<path d="M1072 624.100l9.500-9.800" stroke="#b2b2b2" stroke-width="1.900" stroke-linecap="round"/>
<path d="M1082.700 613.100l1.500-1.500" stroke="#b2b2b2" stroke-width="2.300" stroke-linecap="butt"/>
<path d="M1083.2 618.4L1084.24 621.06L1086.9 622.1L1084.24 623.14L1083.2 625.8000000000001L1082.16 623.14L1079.5 622.1L1082.16 621.06ZM1074 612.2L1074.70 614.00L1076.5 614.7L1074.70 615.40L1074 617.2L1073.30 615.40L1071.5 614.7L1073.30 614.00ZM1076.7 609.3L1077.15 610.45L1078.3 610.9L1077.15 611.35L1076.7 612.5L1076.25 611.35L1075.1000000000001 610.9L1076.25 610.45Z" fill="#b8b8b8"/>
<!-- fullscreen arrows -->
<g stroke="#b2b2b2" stroke-width="1.5" fill="none"><path d="M1260 612l6.700 6.700M1269.300 621.300l6.700 6.700"/><path d="M1259.500 618.300v-6.800h6.800M1276.500 621.700v6.800h-6.800"/></g>

</svg>
</div>
</body>
</html>
